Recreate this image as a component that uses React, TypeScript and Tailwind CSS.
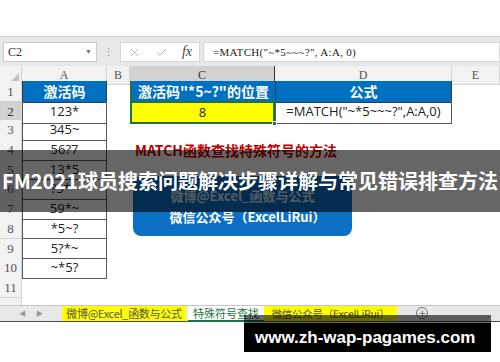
import { X, Check, Plus } from "lucide-react";

const COLS = "grid grid-cols-[22px_85px_23px_145px_177px_48px]";
const SANS = "font-['Open_Sans','Noto_Sans_CJK_SC',sans-serif]";
const CJK = "font-['Noto_Sans_CJK_SC','Noto_Sans',sans-serif]";
const SERIF = "font-['Liberation_Serif','Noto_Sans_CJK_SC',serif]";

const codes = ["123*", "345~", "56?7", "13*5", "?5*~", "59*~", "*5~?", "5?*~", "~*5?"];

function RowHead({ n, sel }: { n: number; sel?: boolean }) {
    return (
        <div
            className={`${SERIF} flex items-center justify-center text-[13px] border-r border-b border-[#d4d4d4] ${
                sel ? "bg-[#d2d2d2] text-[#333]" : "bg-[#f2f2f2] text-[#555]"
            }`}
        >
            {n}
        </div>
    );
}

function ColHead({ l, sel }: { l: string; sel?: boolean }) {
    return (
        <div
            className={`${SERIF} flex items-center justify-center text-[12px] border-r border-b ${
                sel ? "bg-[#d2d2d2] border-b-[#217346] text-[#333]" : "bg-[#f2f2f2] border-[#d4d4d4] text-[#555]"
            }`}
        >
            {l}
        </div>
    );
}

export default function App() {
    return (
        <div className="relative w-[500px] h-[362px] bg-white overflow-hidden">
            <div className="h-[36px] bg-white" />

            {/* formula bar */}
            <div className="h-[30px] bg-[#e8e8e8] border-t border-[#cfcfcf] flex items-start pt-[5px]">
                <div className={`${SERIF} ml-[3px] w-[94px] h-[20px] bg-white border border-[#c9c9c9] flex items-center justify-between pl-[4px] pr-[4px] text-[12px] text-[#333]`}>
                    <span>C2</span>
                    <span className="text-[7px] text-[#777]">▼</span>
                </div>
                <div className="w-[23px] h-[20px] flex items-center justify-center text-[#888] text-[11px]">⋮</div>
                <div className="w-[80px] h-[20px] bg-white border border-[#d6d6d6] flex items-center justify-between px-[7px]">
                    <X className="w-[13px] h-[13px] text-[#a0a0a0]" strokeWidth={1.3} />
                    <Check className="w-[13px] h-[13px] text-[#a0a0a0]" strokeWidth={1.5} />
                    <span className={`${SERIF} italic text-[14px] text-[#444] leading-none`}>fx</span>
                </div>
                <div className={`${SERIF} ml-[3px] flex-1 h-[20px] bg-white border border-[#d6d6d6] flex items-center pl-[9px] text-[11px] text-[#222] tracking-[0.3px]`}>
                    =MATCH("~*5~~~?", A:A, 0)
                </div>
            </div>

            {/* column headers */}
            <div className={`${COLS} h-[15px]`}>
                <div className="bg-[#f2f2f2] border-r border-b border-[#d4d4d4] flex items-end justify-end p-[2px]">
                    <div className="w-0 h-0 border-l-[9px] border-l-transparent border-b-[9px] border-b-[#c2c2c2]" />
                </div>
                <ColHead l="A" />
                <ColHead l="B" />
                <ColHead l="C" sel />
                <ColHead l="D" />
                <ColHead l="E" />
            </div>

            {/* row 1 */}
            <div className={`${COLS} h-[19.7px] ${CJK}`}>
                <RowHead n={1} />
                <div className="bg-[#0070c0] text-white font-bold text-[14px] flex items-center justify-center border-x border-b border-[#3c3c3c]">激活码</div>
                <div />
                <div className="bg-[#0070c0] text-white font-bold text-[14px] flex items-center pl-[6px] border-b border-[#3c3c3c] border-l-2 border-l-[#217346] whitespace-nowrap">
                    激活码"*5~?"的位置
                </div>
                <div className="bg-[#0070c0] text-white font-bold text-[14px] flex items-center justify-center border-x border-b border-[#3c3c3c]">公式</div>
                <div />
            </div>

            {/* row 2 */}
            <div className={`${COLS} h-[19.7px] ${SANS}`}>
                <RowHead n={2} sel />
                <div className="flex items-center justify-center text-[13px] text-[#222] border-x border-b border-[#5a5a5a]">123*</div>
                <div />
                <div className="relative bg-[#ffff00] flex items-center justify-center text-[13px] text-[#222] border-2 border-[#217346]">
                    8
                    <div className="absolute -right-[4px] -bottom-[4px] w-[5px] h-[5px] bg-[#217346] border border-white" />
                </div>
                <div className="flex items-center justify-center text-[13px] text-[#222] border-x border-b border-[#5a5a5a] whitespace-nowrap">
                    =MATCH("~*5~~~?",A:A,0)
                </div>
                <div />
            </div>

            {codes.slice(1).map((c, i) => (
                <div key={c} className={`${COLS} h-[19.7px] ${SANS}`}>
                    <RowHead n={i + 3} />
                    <div className="flex items-center justify-center text-[13px] text-[#222] border-x border-b border-[#5a5a5a]">{c}</div>
                    <div />
                    <div />
                    <div />
                    <div />
                </div>
            ))}

            <div className={`${COLS} h-[20px]`}>
                <RowHead n={11} />
            </div>
            <div className={`${COLS} h-[7px]`}>
                <div className="bg-[#f2f2f2] border-r border-[#d4d4d4]" />
            </div>

            {/* sheet tabs */}
            <div className={`${CJK} h-[17px] bg-[#e8e8e8] border-t border-[#c6c6c6] border-b border-b-[#4a4a4a] flex items-stretch text-[11px]`}>
                <div className="w-[62px] flex items-center justify-center gap-[10px] text-[7px] text-[#9a9a9a]">
                    <span>◀</span>
                    <span>▶</span>
                </div>
                <div className="w-[124px] bg-[#ffff00] text-[#555] flex items-center justify-center whitespace-nowrap tracking-[-0.3px]">微博@Excel_函数与公式</div>
                <div className="ml-[2px] w-[76px] bg-white text-[#217346] flex items-center justify-center border-b-2 border-[#217346] -mb-[1px]">特殊符号查找</div>
                <div className="w-[133px] bg-[#ffff00] text-[#555] flex items-center justify-center whitespace-nowrap text-[10.5px] tracking-[-0.3px]">微信公众号（ExcelLiRui）</div>
                <div className="ml-[19px] flex items-center">
                    <div className="w-[12px] h-[12px] rounded-full border border-[#777] flex items-center justify-center">
                        <Plus className="w-[9px] h-[9px] text-[#666]" strokeWidth={2} />
                    </div>
                </div>
            </div>

            {/* shapes on the sheet */}
            <div className={`${CJK} absolute left-[135px] top-[140px] text-[14px] font-bold text-[#c00000] whitespace-nowrap`}>
                MATCH函数查找特殊符号的方法
            </div>
            <div className={`${CJK} absolute left-[133px] top-[176px] w-[219px] h-[60px] rounded-[8px] bg-[#0b6fc4] text-white font-bold text-[13px] flex flex-col items-center justify-center gap-[2px]`}>
                <span className="opacity-80">微博@Excel_函数与公式</span>
                <span className="pl-[10px]">微信公众号（ExcelLiRui）</span>
            </div>

            {/* title band */}
            <div className={`${CJK} absolute left-0 right-0 top-[150px] h-[62px] bg-black/60 flex items-center justify-center text-white font-bold text-[20px] whitespace-nowrap`}>
                FM2021球员搜索问题解决步骤详解与常见错误排查方法
            </div>

            {/* url banner */}
            <div className="absolute left-[244px] top-[315px] w-[247px]">
                <div className="h-[8px] bg-black/60" />
                <div className="font-['Liberation_Sans',Arial,sans-serif] h-[29px] bg-black text-white font-bold text-[17px] flex items-center pl-[11px] whitespace-nowrap">
                    www.zh-wap-pagames.com
                </div>
            </div>
        </div>
    );
}
